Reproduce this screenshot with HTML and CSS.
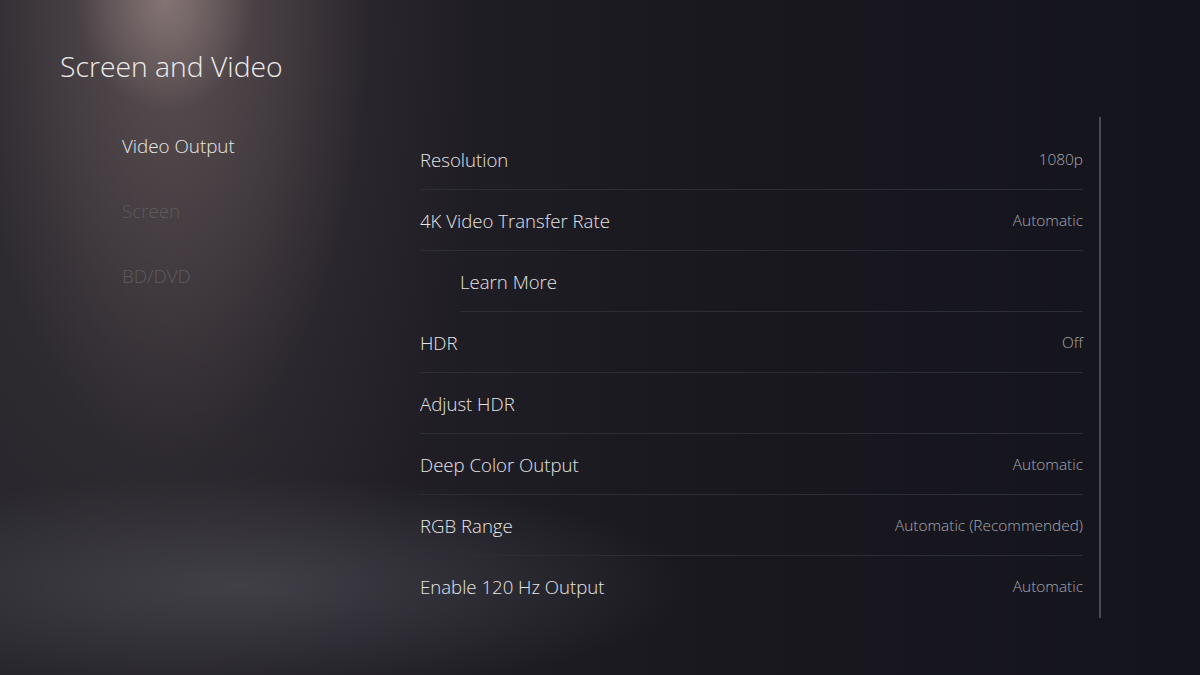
FILE: index.html
```html
<!DOCTYPE html>
<html lang="en">
<head>
	<meta charset="UTF-8">
	<title>Screen and Video</title>
	<link rel="stylesheet" href="styles.css">
</head>
<body>
	<div class="screen">
		<div class="sidebar">
			<h1 class="page-title">Screen and Video</h1>
			<ul class="nav">
				<li class="nav-item active">Video Output</li>
				<li class="nav-item">Screen</li>
				<li class="nav-item">BD/DVD</li>
			</ul>
		</div>

		<ul class="settings">
			<li class="row"><span class="label">Resolution</span><span class="value">1080p</span></li>
			<li class="row"><span class="label">4K Video Transfer Rate</span><span class="value">Automatic</span></li>
			<li class="row sub"><span class="label">Learn More</span></li>
			<li class="row"><span class="label">HDR</span><span class="value">Off</span></li>
			<li class="row"><span class="label">Adjust HDR</span></li>
			<li class="row"><span class="label">Deep Color Output</span><span class="value">Automatic</span></li>
			<li class="row"><span class="label">RGB Range</span><span class="value">Automatic (Recommended)</span></li>
			<li class="row"><span class="label">Enable 120 Hz Output</span><span class="value">Automatic</span></li>
		</ul>

		<div class="scroll">
			<div class="scroll-track"></div>
		</div>
	</div>
</body>
</html>
```

FILE: styles.css
```css
html, body {
	margin: 0;
	padding: 0;
}

body {
	width: 1200px;
	height: 675px;
	overflow: hidden;
	font-family: 'Open Sans', 'Noto Sans', sans-serif;
	font-weight: 300;
	color: #e2e2e4;
	background:
		radial-gradient(ellipse 90px 110px at 165px 0, rgba(160, 140, 138, 0.6), rgba(160, 140, 138, 0) 100%),
		radial-gradient(ellipse 200px 460px at 170px 0, rgba(120, 104, 104, 0.55), rgba(120, 104, 104, 0) 100%),
		radial-gradient(ellipse 300px 700px at 180px 40px, rgba(72, 63, 67, 0.6), rgba(72, 63, 67, 0) 100%),
		radial-gradient(ellipse 450px 110px at 240px 585px, rgba(92, 94, 102, 0.5), rgba(92, 94, 102, 0) 100%),
		linear-gradient(90deg, #27252c 0, #221f27 340px, #19181f 720px, #14141e 1200px);
}

.screen {
	display: grid;
	grid-template-columns: 420px 663px 1fr;
	height: 675px;
}

/* left column */
.sidebar {
	padding: 47px 0 0 60px;
}

.page-title {
	margin: 0;
	font-size: 28.3px;
	font-weight: 300;
	line-height: 38px;
	color: #ececec;
}

.nav {
	list-style: none;
	margin: 29px 0 0 62px;
	padding: 0;
}

.nav-item {
	height: 65px;
	line-height: 65px;
	font-size: 18.8px;
	color: #5e5a5e;
}

.nav-item.active {
	color: #e8e8e8;
}

/* settings list */
.settings {
	list-style: none;
	margin: 0;
	padding: 129px 0 0 0;
}

.row {
	display: flex;
	justify-content: space-between;
	align-items: center;
	height: 60px;
	border-bottom: 1px solid #2c2d36;
}

.row:last-child {
	border-bottom: none;
}

.row.sub {
	margin-left: 40px;
}

.label {
	font-size: 18.6px;
	color: #e4e4e6;
}

.value {
	font-size: 15.4px;
	color: #a8a8ae;
}

/* scrollbar */
.scroll {
	padding: 117px 0 0 16px;
}

.scroll-track {
	width: 2px;
	height: 501px;
	background: #4a4b55;
}
```
